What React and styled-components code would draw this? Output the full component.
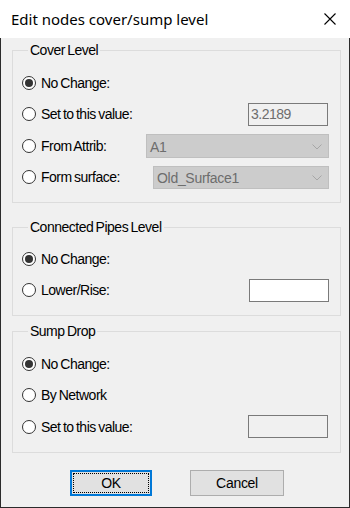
import React from "react";
import styled, { createGlobalStyle } from "styled-components";

const Global = createGlobalStyle`
  html, body { margin: 0; padding: 0; background: #f0f0f0; }
  #root { width: 350px; height: 508px; }
`;

const Window = styled.div`
  width: 350px;
  height: 508px;
  display: flex;
  flex-direction: column;
  font-family: "Liberation Sans", Arial, sans-serif;
  color: #000;
`;

const TitleBar = styled.div`
  height: 38px;
  background: #fff;
  display: flex;
  align-items: center;
  justify-content: space-between;
  padding: 0 14px 0 11px;
  box-sizing: border-box;
  flex: none;
`;

const Title = styled.div`
  font-family: "Noto Sans", "Segoe UI", sans-serif;
  font-size: 15px;
  color: #000;
  margin-top: -1px;
`;

const Body = styled.div`
  flex: 1;
  background: #f0f0f0;
  border: 1px solid #2b2b2b;
  border-top: none;
  padding: 4px 8px 0 11px;
  display: flex;
  flex-direction: column;
  box-sizing: border-box;
`;

const Group = styled.fieldset`
  margin: ${(p) => p.$mt || 0}px 0 0 0;
  border: 1px solid #dcdcdc;
  padding: ${(p) => p.$pt || 9}px 11px ${(p) => p.$pb || 9}px 9px;
  display: flex;
  flex-direction: column;
  min-width: 0;
`;

const Legend = styled.legend`
  margin-left: 6px;
  padding: 0 2px;
  font-size: 14px;
  line-height: 16px;
  letter-spacing: -0.5px;
  word-spacing: -1px;
`;

const Row = styled.div`
  height: ${(p) => p.$h || 31.5}px;
  display: flex;
  align-items: center;
  justify-content: space-between;
`;

const RadioLabel = styled.label`
  display: flex;
  align-items: center;
  gap: 5px;
  font-size: 14px;
  letter-spacing: -0.5px;
  word-spacing: -1px;
  white-space: nowrap;
`;

const RadioCircle = styled.span`
  width: 14px;
  height: 14px;
  box-sizing: border-box;
  border: 1px solid #333;
  border-radius: 50%;
  background: #fff;
  display: flex;
  align-items: center;
  justify-content: center;
  flex: none;
  &::after {
    content: "";
    width: 8px;
    height: 8px;
    border-radius: 50%;
    background: ${(p) => (p.$checked ? "#333" : "transparent")};
  }
`;

const TextBox = styled.div`
  width: 80px;
  height: 23px;
  box-sizing: border-box;
  border: 1px solid #7a7a7a;
  background: ${(p) => (p.$disabled ? "#f0f0f0" : "#fff")};
  color: #6d6d6d;
  font-size: 14px;
  letter-spacing: -0.5px;
  line-height: 19px;
  padding: 1px 0 0 2px;
  margin-right: ${(p) => p.$mr || 0}px;
`;

const Combo = styled.div`
  width: ${(p) => p.$w}px;
  height: ${(p) => p.$h || 24}px;
  box-sizing: border-box;
  border: 1px solid #bfbfbf;
  background: #cccccc;
  color: #6d6d6d;
  font-size: 14px;
  letter-spacing: -0.3px;
  display: flex;
  align-items: center;
  justify-content: space-between;
  padding: 2px 6px 0 3px;
`;

const ButtonRow = styled.div`
  display: flex;
  gap: 38px;
  padding-left: 58px;
  margin-top: 17px;
`;

const Button = styled.div`
  width: ${(p) => p.$w}px;
  height: 26px;
  box-sizing: border-box;
  background: #e1e1e1;
  border: ${(p) => (p.$default ? "2px solid #0078d7" : "1px solid #adadad")};
  display: flex;
  align-items: center;
  justify-content: center;
  font-size: 14px;
  letter-spacing: -0.3px;
  position: relative;
  &::after {
    content: "";
    display: ${(p) => (p.$default ? "block" : "none")};
    position: absolute;
    inset: 1px;
    border: 1px dotted #000;
  }
`;

const Chevron = () => (
  <svg width="10" height="6" viewBox="0 0 10 6">
    <polyline points="0.5,0.5 5,5 9.5,0.5" fill="none" stroke="#a6a6a6" strokeWidth="1" />
  </svg>
);

const CloseIcon = () => (
  <svg width="12" height="12" viewBox="0 0 12 12">
    <path d="M0.5 0.5 L11.5 11.5 M11.5 0.5 L0.5 11.5" stroke="#000" strokeWidth="1.1" />
  </svg>
);

const Radio = ({ checked, children }) => (
  <RadioLabel>
    <RadioCircle $checked={checked} />
    {children}
  </RadioLabel>
);

export default function App() {
  return (
    <>
      <Global />
      <Window>
        <TitleBar>
          <Title>Edit nodes cover/sump level</Title>
          <CloseIcon />
        </TitleBar>
        <Body>
          <Group $pt={9} $pb={9}>
            <Legend>Cover Level</Legend>
            <Row>
              <Radio checked>No Change:</Radio>
            </Row>
            <Row>
              <Radio>Set to this value:</Radio>
              <TextBox $disabled $mr={1}>3.2189</TextBox>
            </Row>
            <Row>
              <Radio>From Attrib:</Radio>
              <Combo $w={183}>
                <span>A1</span>
                <Chevron />
              </Combo>
            </Row>
            <Row>
              <Radio>Form surface:</Radio>
              <Combo $w={176} $h={23}>
                <span>Old_Surface1</span>
                <Chevron />
              </Combo>
            </Row>
          </Group>
          <Group $mt={16} $pt={8} $pb={9}>
            <Legend>Connected Pipes Level</Legend>
            <Row>
              <Radio checked>No Change:</Radio>
            </Row>
            <Row>
              <Radio>Lower/Rise:</Radio>
              <TextBox />
            </Row>
          </Group>
          <Group $mt={7} $pt={9} $pb={9}>
            <Legend>Sump Drop</Legend>
            <Row>
              <Radio checked>No Change:</Radio>
            </Row>
            <Row>
              <Radio>By Network</Radio>
            </Row>
            <Row>
              <Radio>Set to this value:</Radio>
              <TextBox $disabled $mr={1} />
            </Row>
          </Group>
          <ButtonRow>
            <Button $w={82} $default>OK</Button>
            <Button $w={94}>Cancel</Button>
          </ButtonRow>
        </Body>
      </Window>
    </>
  );
}
